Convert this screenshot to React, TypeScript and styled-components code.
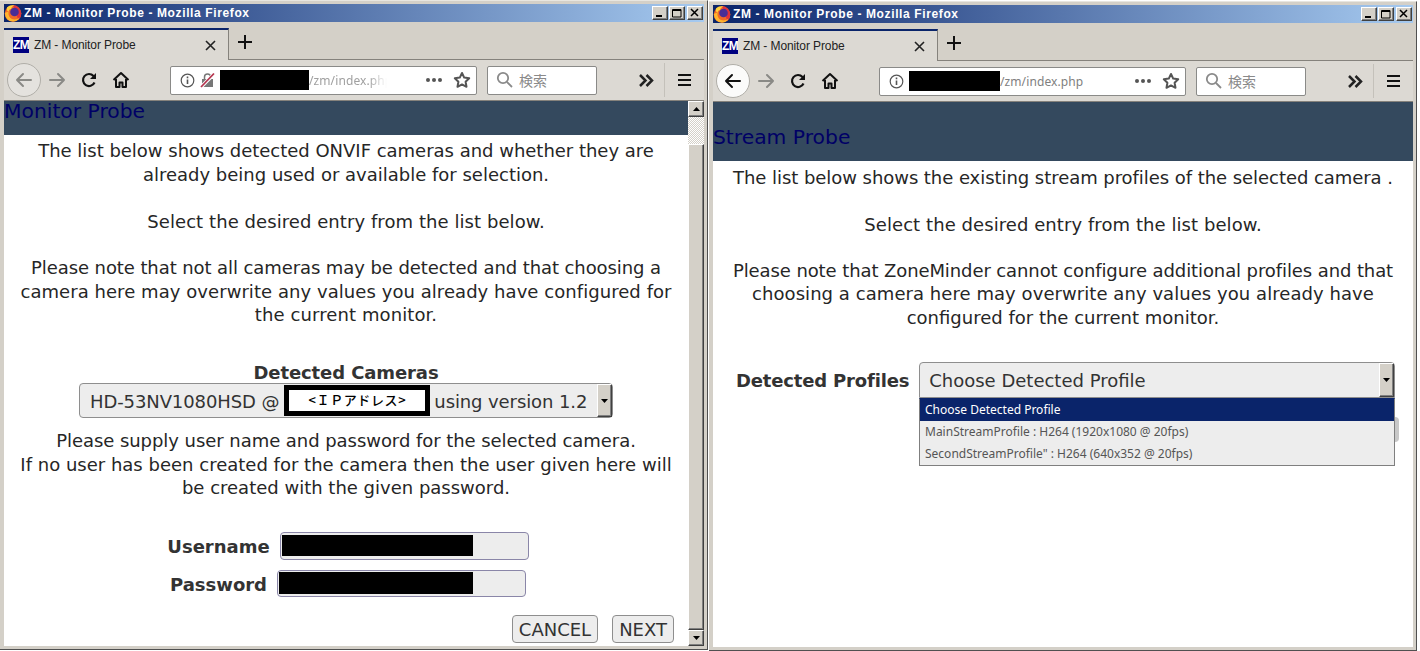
import React from "react";
import styled, { createGlobalStyle, css } from "styled-components";

const Global = createGlobalStyle`
  html, body { margin: 0; padding: 0; background: #fff; }
  body { width: 1420px; height: 651px; overflow: hidden; font-family: "DejaVu Sans", sans-serif; }
`;

const bevel = css`
  background: #d4d0c8;
  border-style: solid;
  border-width: 1px;
  border-color: #fff #404040 #404040 #fff;
  box-shadow: inset -1px -1px 0 #808080;
  box-sizing: border-box;
`;

const Desktop = styled.div`
  display: flex;
  align-items: flex-start;
  gap: 1px;
  width: 1420px;
  height: 651px;
`;

const WindowFrame = styled.div<{ $top: number }>`
  box-sizing: border-box;
  width: 708px;
  height: 650px;
  margin-top: ${(p) => p.$top}px;
  padding: 3px 3px 3px 4px;
  display: flex;
  flex-direction: column;
  background: #d4d0c8;
  border-top: 1px solid #e8e6e0;
  border-right: 1px solid #505050;
  border-bottom: 1px solid #505050;
`;

const TitleBar = styled.div`
  height: 18px;
  flex: none;
  display: flex;
  align-items: center;
  background: linear-gradient(90deg, #0a246a 0%, #a6caf0 100%);
  color: #fff;
  font: bold 12px/18px "Liberation Sans", sans-serif;
  letter-spacing: 0.62px;
  white-space: pre;
`;

const TitleText = styled.span`
  margin-left: 2px;
  flex: 1;
`;

const CaptionButton = styled.div`
  ${bevel}
  width: 16px;
  height: 14px;
  display: flex;
  align-items: center;
  justify-content: center;
  margin-right: 1px;
  &:last-child { margin-right: 1px; margin-left: 1px; }
`;

const TabStrip = styled.div`
  height: 38px;
  flex: none;
  display: flex;
  align-items: flex-end;
  border-bottom: 1px solid #85827c;
  box-sizing: border-box;
`;

const Tab = styled.div`
  box-sizing: border-box;
  width: 225px;
  height: 32px;
  margin-bottom: -1px;
  display: flex;
  align-items: center;
  padding: 0 12px 0 9px;
  background: #dcd9d3;
  border-top: 2px solid #0a246a;
  border-right: 1px solid #85827c;
  color: #222;
  font: 12px "Liberation Sans", sans-serif;
  letter-spacing: -0.1px;
`;

const Favicon = styled.span`
  width: 16px;
  height: 16px;
  flex: none;
  margin-right: 5px;
  background: #000080;
  color: #fff;
  font: bold 12px/16px "Liberation Sans", sans-serif;
  letter-spacing: -0.5px;
  text-align: center;
  overflow: hidden;
`;

const TabLabel = styled.span`
  flex: 1;
  white-space: nowrap;
`;

const NewTab = styled.div`
  margin: 0 0 6px 9px;
  height: 22px;
  display: flex;
  align-items: center;
`;

const Toolbar = styled.div`
  height: 41px;
  flex: none;
  display: flex;
  align-items: center;
  background: #dcd9d3;
  border-bottom: 1px solid #85827c;
  box-sizing: border-box;
  padding: 0 0 0 3px;
`;

const BackCircle = styled.div<{ $active: boolean }>`
  box-sizing: border-box;
  width: 34px;
  height: 34px;
  border-radius: 50%;
  border: 1px solid #b0aea8;
  background: ${(p) => (p.$active ? "#fbfbfa" : "#e4e2de")};
  display: flex;
  align-items: center;
  justify-content: center;
  flex: none;
`;

const NavIcon = styled.div<{ $ml: number }>`
  width: 20px;
  height: 20px;
  margin-left: ${(p) => p.$ml}px;
  flex: none;
  display: flex;
  align-items: center;
  justify-content: center;
`;

const UrlBar = styled.div`
  box-sizing: border-box;
  width: 307px;
  height: 29px;
  margin-left: 39px;
  flex: none;
  display: flex;
  align-items: center;
  background: #fff;
  border: 1px solid #8a8a88;
  border-radius: 2px;
  padding-left: 9px;
`;

const Redaction = styled.div<{ $w: number; $h: number }>`
  width: ${(p) => p.$w}px;
  height: ${(p) => p.$h}px;
  background: #000;
  flex: none;
`;

const UrlPath = styled.span<{ $fade: boolean }>`
  font: 12px "Noto Sans", sans-serif;
  letter-spacing: 0.1px;
  color: ${(p) => (p.$fade ? "#a0a0a0" : "#808080")};
  white-space: nowrap;
  ${(p) => p.$fade && css`
    -webkit-mask-image: linear-gradient(90deg, #000 72%, transparent 94%);
    mask-image: linear-gradient(90deg, #000 72%, transparent 94%);
  `}
`;

const UrlTrail = styled.div`
  margin-left: auto;
  display: flex;
  align-items: center;
  gap: 10px;
  padding-right: 5px;
`;

const SearchBox = styled.div`
  box-sizing: border-box;
  width: 110px;
  height: 29px;
  margin-left: 10px;
  flex: none;
  display: flex;
  align-items: center;
  gap: 6px;
  background: #fff;
  border: 1px solid #8a8a88;
  border-radius: 2px;
  padding: 0 0 1px 8px;
  color: #8a8a8a;
  font: 14px/20px "Noto Sans CJK JP", sans-serif;
`;

const ToolDivider = styled.div`
  width: 1px;
  height: 34px;
  background: #c4c1ba;
  margin-left: 8px;
  flex: none;
`;

const Viewport = styled.div`
  flex: 1;
  min-height: 0;
  display: flex;
  background: #fff;
`;

const Page = styled.div`
  flex: 1;
  min-width: 0;
  color: #262626;
  font: 18px/23.5px "DejaVu Sans", sans-serif;
  text-align: center;
  position: relative;
`;

const PageHeader = styled.h1<{ $h: number; $pt: number }>`
  box-sizing: border-box;
  height: ${(p) => p.$h}px;
  margin: 0;
  padding: ${(p) => p.$pt}px 0 0 0;
  background: #34495e;
  color: #000066;
  font: 400 20.3px/20px "DejaVu Sans", sans-serif;
  text-align: left;
`;

const Copy = styled.p<{ $mt: number }>`
  margin: ${(p) => p.$mt}px 0 0;
`;

const Line = styled.span<{ $track?: number }>`
  display: block;
  letter-spacing: ${(p) => p.$track ?? 0}px;
`;

const FieldHeading = styled.div`
  margin-top: 34.5px;
  font-weight: bold;
  height: 22px;
  line-height: 24px;
  letter-spacing: -0.1px;
  color: #333;
`;

const FakeSelect = styled.div`
  box-sizing: border-box;
  width: 534px;
  height: 35px;
  margin: 0 auto;
  display: flex;
  align-items: center;
  background: #ededed;
  border: 1px solid #8e8e8e;
  border-radius: 4px;
  padding-left: 10px;
  color: #333;
  white-space: nowrap;
  letter-spacing: -0.1px;
`;

const SelectText = styled.span`
  padding-top: 2px;
`;

const SelectArrow = styled.div`
  ${bevel}
  width: 15px;
  align-self: stretch;
  margin-left: auto;
  display: flex;
  align-items: center;
  justify-content: center;
`;

const IpMask = styled.div`
  box-sizing: border-box;
  width: 146px;
  height: 31px;
  border: 5px solid #000;
  background: #fff;
  margin: 0 4px 0 5px;
  color: #000;
  font: 500 13px/19px "Noto Sans CJK JP", sans-serif;
  letter-spacing: 0.6px;
  text-align: center;
  flex: none;
`;

const FieldRow = styled.div<{ $mt: number }>`
  display: flex;
  justify-content: center;
  align-items: center;
  gap: 10px;
  margin-top: ${(p) => p.$mt}px;
  padding-left: 4px;
`;

const FieldLabel = styled.label<{ $pt: number }>`
  font-weight: bold;
  color: #333;
  padding-top: ${(p) => p.$pt}px;
`;

const TextInput = styled.div<{ $h: number }>`
  box-sizing: border-box;
  width: 249px;
  height: ${(p) => p.$h}px;
  padding: 2px 1px;
  background: #ededed;
  border: 1px solid #8a86a8;
  border-radius: 4px;
  display: flex;
  align-items: center;
`;

const ButtonRow = styled.div`
  display: flex;
  justify-content: flex-end;
  gap: 14px;
  margin-top: 18px;
  padding-right: 14px;
`;

const PageButton = styled.div`
  box-sizing: border-box;
  height: 28px;
  padding: 0 6px;
  background: #ededed;
  border: 1px solid #8e8e8e;
  border-radius: 4px;
  color: #333;
  line-height: 27px;
`;

const Scrollbar = styled.div`
  width: 16px;
  flex: none;
  display: flex;
  flex-direction: column;
`;

const ScrollButton = styled.div`
  ${bevel}
  height: 16px;
  flex: none;
  display: flex;
  align-items: center;
  justify-content: center;
`;

const ScrollTrack = styled.div`
  height: 27px;
  flex: none;
  background: repeating-conic-gradient(#fff 0 25%, #d4d0c8 0 50%) 0 0 / 2px 2px;
`;

const ScrollThumb = styled.div`
  ${bevel}
  flex: 1;
`;

const ProfileRow = styled.div`
  display: flex;
  align-items: center;
  margin-top: 32.5px;
  padding: 0 18px 0 23px;
  gap: 10px;
  position: relative;
`;

const ProfileLabel = styled.label`
  font-weight: bold;
  color: #333;
  white-space: nowrap;
  letter-spacing: -0.17px;
  padding-top: 2px;
`;

const ProfileSelect = styled.div`
  box-sizing: border-box;
  flex: 1;
  height: 36px;
  display: flex;
  align-items: center;
  background: #ededed;
  border: 1px solid #8e8e8e;
  border-radius: 4px 4px 0 0;
  padding-left: 9px;
  color: #333;
`;

const HiddenEdge = styled.div`
  position: absolute;
  left: 682px;
  top: 55px;
  width: 4px;
  height: 25px;
  border-radius: 0 4px 4px 0;
  background: #c8c8c8;
`;

const DropList = styled.ul`
  position: absolute;
  left: 206px;
  top: 36px;
  width: 476px;
  box-sizing: border-box;
  margin: 0;
  padding: 0;
  list-style: none;
  background: #ededed;
  border: 1px solid #7f7f7f;
  border-top: 1px solid #0a246a;
  color: #444;
  font: 12px/22px "Noto Sans", sans-serif;
  text-align: left;
`;

const DropItem = styled.li<{ $selected?: boolean }>`
  height: 22px;
  padding-left: 5px;
  background: ${(p) => (p.$selected ? "#0a246a" : "transparent")};
  color: ${(p) => (p.$selected ? "#fff" : "#555")};
`;

const Firefox = () => (
  <svg width="18" height="18" viewBox="0 0 18 18">
    <circle cx="9" cy="9.500" r="8.300" fill="#f26a26" />
    <path d="M9 1.200a8.300 8.300 0 0 1 8.300 8.300 8.300 8.300 0 0 1-3 6.400z" fill="#e0323c" />
    <circle cx="10.500" cy="8" r="4.300" fill="#4a2d96" />
    <path d="M1 9c0 5 3.500 8.500 8 8.500 3 0 5.500-1.500 6.500-4-2 2-5 2.500-7.500 1.500S4 11 4.500 8C3 8 2 8 1 9z" fill="#ffb52e" />
    <path d="M3 3.500C5 1.500 8 .8 10.500 1.500 8.500 2 7.500 3.200 7 5 5.500 5.200 4.500 6.500 4.500 8 3 7 2.500 5 3 3.500z" fill="#ffd23d" />
  </svg>
);

const Caption = ({ kind }: { kind: "min" | "max" | "close" }) => (
  <CaptionButton>
    <svg width="10" height="10" viewBox="0 0 10 10">
      {kind === "min" && <rect x="1" y="7" width="6" height="2" fill="#000" />}
      {kind === "max" && <path d="M0.500 1.500h8.500v7.500h-8.500zM0.500 2.500h8.500" fill="none" stroke="#000" />}
      {kind === "close" && <path d="M1 1l7 7M8 1l-7 7" stroke="#000" strokeWidth="1.500" />}
    </svg>
  </CaptionButton>
);

const Arrow = ({ dir, color }: { dir: "left" | "right"; color: string }) => (
  <svg width="18" height="18" viewBox="0 0 18 18" fill="none" stroke={color} strokeWidth="2" strokeLinecap="round" strokeLinejoin="round">
    {dir === "left" ? <path d="M2 9h14M8 3L2 9l6 6" /> : <path d="M2 9h14M10 3l6 6-6 6" />}
  </svg>
);

const Reload = () => (
  <svg width="18" height="18" viewBox="0 0 18 18" fill="none" stroke="#111" strokeWidth="2.200">
    <path d="M14.500 11.500A6 6 0 1 1 13.500 5L15 6.500" />
    <path d="M16 2v6h-6z" fill="#111" stroke="none" />
  </svg>
);

const Home = () => (
  <svg width="18" height="18" viewBox="0 0 18 18" fill="none" stroke="#111" strokeWidth="2" strokeLinejoin="round">
    <path d="M1.500 9L9 2l7.500 7" />
    <path d="M4 8v8h3.500v-4.500h3V16H14V8" />
  </svg>
);

const Info = () => (
  <svg width="15" height="15" viewBox="0 0 15 15" fill="none" stroke="#555" style={{ flex: "none" }}>
    <circle cx="7.500" cy="7.500" r="6.300" strokeWidth="1.200" />
    <path d="M7.500 6.500v4.500" strokeWidth="1.600" />
    <path d="M7.500 3.500v1.800" strokeWidth="1.600" />
  </svg>
);

const BrokenLock = () => (
  <svg width="16" height="16" viewBox="0 0 16 16" style={{ flex: "none", marginLeft: 5, marginRight: 4 }}>
    <path d="M2 7h11v8H2z" fill="#777" />
    <path d="M4.500 7V5a3 3 0 0 1 6 0v2" fill="none" stroke="#777" strokeWidth="1.500" />
    <path d="M1 15L14 2" stroke="#fff" strokeWidth="3.500" />
    <path d="M1 15L14 1.500" stroke="#b5344e" strokeWidth="1.800" />
  </svg>
);

const Dots = () => (
  <svg width="18" height="6" viewBox="0 0 18 6" fill="#555">
    <circle cx="3" cy="3" r="2" />
    <circle cx="9" cy="3" r="2" />
    <circle cx="15" cy="3" r="2" />
  </svg>
);

const Star = () => (
  <svg width="18" height="18" viewBox="0 0 18 18" fill="none" stroke="#555" strokeWidth="2" strokeLinejoin="round">
    <path d="M9 2l2.200 4.600 5 .7-3.600 3.500.9 5L9 13.400 4.500 15.800l.9-5L1.800 7.300l5-.7z" />
  </svg>
);

const Loupe = () => (
  <svg width="17" height="17" viewBox="0 0 17 17" fill="none" stroke="#8a8a8a" strokeWidth="1.800" style={{ flex: "none" }}>
    <circle cx="7" cy="7" r="5.200" />
    <path d="M11 11l5 5" />
  </svg>
);

const Chevrons = () => (
  <svg width="15" height="13" viewBox="0 0 15 13" fill="none" stroke="#222" strokeWidth="2.500">
    <path d="M1 1l5.500 5.500L1 12M7.500 1L13 6.500 7.500 12" />
  </svg>
);

const Burger = () => (
  <svg width="14" height="12" viewBox="0 0 14 12" fill="#111">
    <rect width="13" height="2" />
    <rect y="5" width="13" height="2" />
    <rect y="10" width="13" height="2" />
  </svg>
);

const Tri = ({ up }: { up?: boolean }) => (
  <svg width="7" height="4" viewBox="0 0 7 4" fill="#000">
    <path d={up ? "M0 4h7L3.500 0z" : "M0 0h7L3.500 4z"} />
  </svg>
);

const Chrome = ({ active, fade, children }: { active: boolean; fade: boolean; children: React.ReactNode }) => (
  <>
    <TitleBar>
      <Firefox />
      <TitleText>ZM - Monitor Probe - Mozilla Firefox</TitleText>
      <Caption kind="min" />
      <Caption kind="max" />
      <Caption kind="close" />
    </TitleBar>
    <TabStrip>
      <Tab>
        <Favicon>ZM</Favicon>
        <TabLabel>ZM - Monitor Probe</TabLabel>
        <svg width="11" height="11" viewBox="0 0 11 11" stroke="#222" strokeWidth="1.600"><path d="M1 1l9 9M10 1l-9 9" /></svg>
      </Tab>
      <NewTab>
        <svg width="14" height="14" viewBox="0 0 14 14" stroke="#111" strokeWidth="2"><path d="M7 0v14M0 7h14" /></svg>
      </NewTab>
    </TabStrip>
    <Toolbar>
      <BackCircle $active={active}><Arrow dir="left" color={active ? "#111" : "#8a8a86"} /></BackCircle>
      <NavIcon $ml={6}><Arrow dir="right" color="#8a8a86" /></NavIcon>
      <NavIcon $ml={12}><Reload /></NavIcon>
      <NavIcon $ml={12}><Home /></NavIcon>
      <UrlBar>
        <Info />
        {fade ? <BrokenLock /> : <span style={{ width: 5 }} />}
        <Redaction $w={fade ? 89 : 91} $h={20} />
        <UrlPath $fade={fade}>/zm/index.php</UrlPath>
        <UrlTrail><Dots /><Star /></UrlTrail>
      </UrlBar>
      <SearchBox><Loupe />検索</SearchBox>
      <NavIcon $ml={39}><Chevrons /></NavIcon>
      <ToolDivider />
      <NavIcon $ml={10}><Burger /></NavIcon>
    </Toolbar>
    <Viewport>{children}</Viewport>
  </>
);

export default function App() {
  return (
    <Desktop>
      <Global />
      <WindowFrame $top={0}>
        <Chrome active={false} fade>
          <Page>
            <PageHeader $h={34} $pt={0}>Monitor Probe</PageHeader>
            <Copy $mt={4}>
              <Line $track={-0.015}>The list below shows detected ONVIF cameras and whether they are</Line>
              <Line>already being used or available for selection.</Line>
            </Copy>
            <Copy $mt={23.5}><Line $track={0.07}>Select the desired entry from the list below.</Line></Copy>
            <Copy $mt={23}>
              <Line $track={-0.087}>Please note that not all cameras may be detected and that choosing a</Line>
              <Line $track={0.058}>camera here may overwrite any values you already have configured for</Line>
              <Line $track={0.1}>the current monitor.</Line>
            </Copy>
            <FieldHeading>Detected Cameras</FieldHeading>
            <FakeSelect>
              <SelectText>HD-53NV1080HSD @</SelectText>
              <IpMask>&lt;ＩＰアドレス&gt;</IpMask>
              <SelectText>using version 1.2</SelectText>
              <SelectArrow><Tri /></SelectArrow>
            </FakeSelect>
            <Copy $mt={11}>
              <Line $track={-0.05}>Please supply user name and password for the selected camera.</Line>
              <Line $track={0.01}>If no user has been created for the camera then the user given here will</Line>
              <Line>be created with the given password.</Line>
            </Copy>
            <FieldRow $mt={32}>
              <FieldLabel $pt={2}>Username</FieldLabel>
              <TextInput $h={28}><Redaction $w={191} $h={21} /></TextInput>
            </FieldRow>
            <FieldRow $mt={10}>
              <FieldLabel $pt={3}>Password</FieldLabel>
              <TextInput $h={27}><Redaction $w={194} $h={22} /></TextInput>
            </FieldRow>
            <ButtonRow>
              <PageButton>CANCEL</PageButton>
              <PageButton>NEXT</PageButton>
            </ButtonRow>
          </Page>
          <Scrollbar>
            <ScrollButton><Tri up /></ScrollButton>
            <ScrollTrack />
            <ScrollThumb />
            <ScrollButton><Tri /></ScrollButton>
          </Scrollbar>
        </Chrome>
      </WindowFrame>
      <WindowFrame $top={1}>
        <Chrome active fade={false}>
          <Page>
            <PageHeader $h={59} $pt={25}>Stream Probe</PageHeader>
            <Copy $mt={5}><Line $track={-0.053}>The list below shows the existing stream profiles of the selected camera .</Line></Copy>
            <Copy $mt={23}><Line $track={0.07}>Select the desired entry from the list below.</Line></Copy>
            <Copy $mt={22.5}>
              <Line $track={-0.095}>Please note that ZoneMinder cannot configure additional profiles and that</Line>
              <Line $track={0.06}>choosing a camera here may overwrite any values you already have</Line>
              <Line>configured for the current monitor.</Line>
            </Copy>
            <ProfileRow>
              <ProfileLabel>Detected Profiles</ProfileLabel>
              <ProfileSelect>
                <SelectText>Choose Detected Profile</SelectText>
                <SelectArrow><Tri /></SelectArrow>
              </ProfileSelect>
              <HiddenEdge />
              <DropList>
                <DropItem $selected>Choose Detected Profile</DropItem>
                <DropItem>MainStreamProfile : H264 (1920x1080 @ 20fps)</DropItem>
                <DropItem>SecondStreamProfile" : H264 (640x352 @ 20fps)</DropItem>
              </DropList>
            </ProfileRow>
          </Page>
        </Chrome>
      </WindowFrame>
    </Desktop>
  );
}
